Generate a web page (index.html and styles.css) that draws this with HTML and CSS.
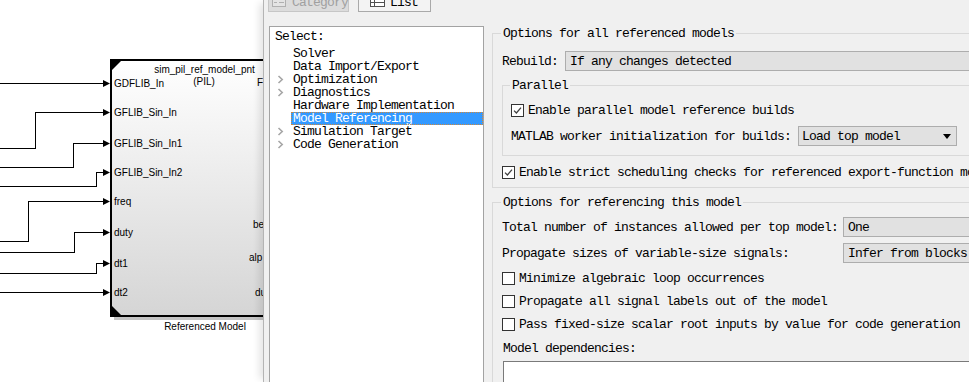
FILE: index.html
```html
<!DOCTYPE html>
<html>
<head>
<meta charset="utf-8">
<link rel="stylesheet" href="styles.css">
</head>
<body>
<div class="screen">
  <div class="canvas">
    <svg class="diagram" width="263" height="382" viewBox="0 0 263 382">
      <defs>
        <linearGradient id="bf" x1="0" y1="0" x2="0" y2="1">
          <stop offset="0" stop-color="#ffffff"/>
          <stop offset="1" stop-color="#d5d5d5"/>
        </linearGradient>
      </defs>
      <rect x="114" y="317" width="160" height="3" fill="#c4c4c4"/>
      <rect x="111" y="60" width="170" height="256" fill="url(#bf)" stroke="#000" stroke-width="2"/>
      <polygon points="112,61 121,61 112,70" fill="#000"/>
      <polygon points="112,306 112,315 121,315" fill="#000"/>
      <g fill="none" stroke="#000" stroke-width="1" shape-rendering="crispEdges">
        <path d="M0 83.5 H103"/>
        <path d="M0 148.5 H35.5 V112.5 H103"/>
        <path d="M0 167.5 H73.5 V143.5 H103"/>
        <path d="M0 186.5 H96.5 V172.5 H103"/>
        <path d="M0 241.5 H28.5 V201.5 H103"/>
        <path d="M0 252.5 H74.5 V232.5 H103"/>
        <path d="M0 273.5 H96.5 V263.5 H103"/>
        <path d="M0 292.5 H103"/>
      </g>
      <g fill="#000">
        <polygon points="103,80 110,83.5 103,87"/>
        <polygon points="103,109 110,112.5 103,116"/>
        <polygon points="103,140 110,143.5 103,147"/>
        <polygon points="103,169 110,172.5 103,176"/>
        <polygon points="103,198 110,201.5 103,205"/>
        <polygon points="103,229 110,232.5 103,236"/>
        <polygon points="103,260 110,263.5 103,267"/>
        <polygon points="103,289 110,292.5 103,296"/>
      </g>
      <g class="dtext">
        <text x="204.5" y="72.5" text-anchor="middle">sim_pil_ref_model_pnt</text>
        <text x="204" y="85" text-anchor="middle">(PIL)</text>
        <text x="114" y="87">GDFLIB_In</text>
        <text x="114" y="116">GFLIB_Sin_In</text>
        <text x="114" y="147">GFLIB_Sin_In1</text>
        <text x="114" y="176">GFLIB_Sin_In2</text>
        <text x="114" y="205">freq</text>
        <text x="114" y="236">duty</text>
        <text x="114" y="267">dt1</text>
        <text x="114" y="296">dt2</text>
        <text x="257" y="86">F</text>
        <text x="253" y="228">be</text>
        <text x="249" y="261">alp</text>
        <text x="255" y="296">du</text>
        <text x="205" y="329.5" text-anchor="middle">Referenced Model</text>
      </g>
    </svg>
  </div>

  <div class="dialog">
    <div class="toolbar">
      <div class="tbtn tbtn-cat">
        <svg class="tb-icon" width="14" height="11" viewBox="0 0 14 11">
          <rect x="0.5" y="0.5" width="13" height="10" fill="#e4e4e4" stroke="#b0b0b0"/>
          <path d="M2 3.5 H5 M2 6.5 H5 M7 3.5 H12 M7 6.5 H12" stroke="#b0b0b0"/>
        </svg>
        <span>Category</span>
      </div>
      <div class="tbtn tbtn-list">
        <svg class="tb-icon" width="15" height="11" viewBox="0 0 15 11">
          <rect x="0.5" y="0.5" width="14" height="10" fill="#fff" stroke="#505050"/>
          <path d="M0.5 3.5 H14.5 M0.5 6.5 H14.5 M4.5 0.5 V10.5" stroke="#505050"/>
        </svg>
        <span>List</span>
      </div>
    </div>

    <div class="content">
      <div class="tree">
        <div class="tree-head">Select:</div>
        <ul class="tree-list">
          <li class="node"><span class="exp"></span><span class="node-lbl">Solver</span></li>
          <li class="node"><span class="exp"></span><span class="node-lbl">Data Import/Export</span></li>
          <li class="node"><span class="exp"><svg width="7" height="9" viewBox="0 0 7 9"><path d="M1.5 1 L5.2 4.5 L1.5 8" fill="none" stroke="#a6a6a6" stroke-width="1.6"/></svg></span><span class="node-lbl">Optimization</span></li>
          <li class="node"><span class="exp"><svg width="7" height="9" viewBox="0 0 7 9"><path d="M1.5 1 L5.2 4.5 L1.5 8" fill="none" stroke="#a6a6a6" stroke-width="1.6"/></svg></span><span class="node-lbl">Diagnostics</span></li>
          <li class="node"><span class="exp"></span><span class="node-lbl">Hardware Implementation</span></li>
          <li class="node"><span class="exp"></span><span class="node-lbl selected">Model Referencing</span></li>
          <li class="node"><span class="exp"><svg width="7" height="9" viewBox="0 0 7 9"><path d="M1.5 1 L5.2 4.5 L1.5 8" fill="none" stroke="#a6a6a6" stroke-width="1.6"/></svg></span><span class="node-lbl">Simulation Target</span></li>
          <li class="node"><span class="exp"><svg width="7" height="9" viewBox="0 0 7 9"><path d="M1.5 1 L5.2 4.5 L1.5 8" fill="none" stroke="#a6a6a6" stroke-width="1.6"/></svg></span><span class="node-lbl">Code Generation</span></li>
        </ul>
      </div>

      <div class="pane">
        <div class="group g1">
          <div class="group-title">Options for all referenced models</div>
          <div class="row r-rebuild">
            <span class="lbl">Rebuild:</span>
            <div class="combo combo-fill">If any changes detected</div>
          </div>
          <div class="group sub">
            <div class="group-title">Parallel</div>
            <div class="check-row cr-par">
              <span class="cb"><svg width="9" height="9" viewBox="0 0 9 9"><path d="M1 4.6 L3.4 7 L8 1.6" fill="none" stroke="#404040" stroke-width="1.3"/></svg></span>
              <span>Enable parallel model reference builds</span>
            </div>
            <div class="row r-matlab">
              <span class="lbl">MATLAB worker initialization for builds:</span>
              <div class="combo combo-arrow">
                <span>Load top model</span>
                <svg width="8" height="5" viewBox="0 0 8 5"><polygon points="0,0 8,0 4,5" fill="#000"/></svg>
              </div>
            </div>
          </div>
          <div class="check-row cr-strict">
            <span class="cb"><svg width="9" height="9" viewBox="0 0 9 9"><path d="M1 4.6 L3.4 7 L8 1.6" fill="none" stroke="#404040" stroke-width="1.3"/></svg></span>
            <span class="nowrap">Enable strict scheduling checks for referenced export-function models</span>
          </div>
        </div>

        <div class="group g2">
          <div class="group-title">Options for referencing this model</div>
          <div class="row r-total">
            <span class="lbl lbl-col">Total number of instances allowed per top model:</span>
            <div class="combo combo-fill">One</div>
          </div>
          <div class="row r-prop">
            <span class="lbl lbl-col">Propagate sizes of variable-size signals:</span>
            <div class="combo combo-fill">Infer from blocks</div>
          </div>
          <div class="check-row cr-g2"><span class="cb"></span><span>Minimize algebraic loop occurrences</span></div>
          <div class="check-row cr-g2"><span class="cb"></span><span>Propagate all signal labels out of the model</span></div>
          <div class="check-row cr-g2"><span class="cb"></span><span>Pass fixed-size scalar root inputs by value for code generation</span></div>
          <div class="plain">Model dependencies:</div>
          <div class="textbox"></div>
        </div>
      </div>
    </div>
  </div>
</div>
</body>
</html>
```

FILE: styles.css
```css
html, body {
  margin: 0;
  padding: 0;
  background: #ffffff;
}

body {
  width: 969px;
  height: 382px;
  overflow: hidden;
}

.screen {
  display: flex;
  width: 969px;
  height: 382px;
  overflow: hidden;
}

.canvas {
  flex: none;
  width: 263px;
  height: 382px;
  background: #ffffff;
}

.diagram {
  display: block;
}

.dtext text {
  font-family: "Liberation Sans", Arial, sans-serif;
  font-size: 10px;
  fill: #000;
}

.dialog {
  position: relative;
  z-index: 1;
  flex: none;
  width: 706px;
  height: 382px;
  box-sizing: border-box;
  background: #f0f0f0;
  border-left: 1px solid #b4b4b4;
  box-shadow: -7px 0 7px -3px rgba(0, 0, 0, 0.10);
  padding-left: 5px;
  overflow: hidden;
  font-family: "Liberation Mono", "DejaVu Sans Mono", monospace;
  font-size: 13px;
  line-height: 13px;
  letter-spacing: -0.8px;
  color: #000;
}

/* toolbar */
.toolbar {
  display: flex;
  gap: 9px;
  margin: -13px 0 0 -1px;
  height: 25px;
}

.tbtn {
  height: 25px;
  box-sizing: border-box;
  display: flex;
  align-items: flex-end;
  padding-bottom: 2px;
  border: 1px solid #adadad;
  white-space: nowrap;
}

.tb-icon {
  flex: none;
  margin-bottom: 2px;
}

.tbtn-cat {
  width: 81px;
  padding-left: 3px;
  gap: 6px;
  background: #dcdcdc;
  border-color: #c6c6c6;
  color: #a0a0a0;
}

.tbtn-list {
  width: 73px;
  padding-left: 11px;
  gap: 5px;
  background: #f3f3f3;
  border-color: #a9a9a9;
}

/* content */
.content {
  display: flex;
  margin-top: 14px;
}

.tree {
  flex: none;
  width: 215px;
  height: 400px;
  box-sizing: border-box;
  background: #ffffff;
  border: 1px solid #a3a3a3;
  padding: 3px 0 0 5px;
}

.tree-head {
  height: 13px;
}

.tree-list {
  list-style: none;
  margin: 4px 0 0 0;
  padding: 0;
}

.node {
  display: flex;
  height: 13px;
}

.exp {
  flex: none;
  width: 16px;
  display: flex;
  align-items: center;
  padding-left: 2px;
  box-sizing: border-box;
}

.exp svg {
  display: block;
}

.node-lbl {
  flex: 1;
  padding-left: 2px;
  white-space: nowrap;
}

.node-lbl.selected {
  background: #3399ff;
  color: #ffffff;
  outline: 1px dotted #d0883a;
  outline-offset: -1px;
}

/* right pane */
.pane {
  flex: none;
  width: 540px;
  padding-left: 8px;
}

.group {
  border: 1px solid #d9d9d9;
  margin-top: 7px;
  padding: 0 0 7px 9px;
}

.group-title {
  width: max-content;
  margin: -7px 0 0 -1px;
  padding: 0 2px;
  background: #f0f0f0;
  height: 13px;
  white-space: nowrap;
}

.g2 {
  margin-top: 14px;
}

.sub {
  margin-top: 14px;
  padding: 0 0 9px 8px;
}

.row {
  display: flex;
  align-items: center;
  height: 20px;
}

.lbl {
  flex: none;
  white-space: nowrap;
}

.lbl-col {
  width: 341px;
}

.r-rebuild { margin-top: 11px; }
.r-rebuild .combo { margin-left: 7px; }

.r-matlab { margin-top: 8px; }

.r-total { margin-top: 8px; }
.r-prop { margin-top: 6px; }

.combo {
  height: 20px;
  box-sizing: border-box;
  border: 1px solid #adadad;
  background: #e1e1e1;
  padding: 0 5px 0 4px;
  display: flex;
  align-items: center;
  white-space: nowrap;
}

.combo-fill {
  flex: 1;
}

.combo-arrow {
  flex: none;
  width: 159px;
  margin-left: 7px;
  justify-content: space-between;
  padding-left: 3px;
  padding-right: 5px;
}

.combo-arrow svg {
  display: block;
}

.check-row {
  display: flex;
  align-items: center;
  height: 16px;
  white-space: nowrap;
}

.cb {
  flex: none;
  width: 13px;
  height: 13px;
  box-sizing: border-box;
  border: 1px solid #333333;
  background: #ffffff;
  margin-right: 4px;
  display: flex;
  align-items: center;
  justify-content: center;
}

.cb svg {
  display: block;
}

.cr-par { margin-top: 10px; }
.cr-strict { margin-top: 8px; }
.cr-g2 { margin-top: 7px; }

.plain {
  margin-top: 10px;
  height: 13px;
  padding-left: 1px;
}

.textbox {
  margin: 6px 0 0 1px;
  height: 40px;
  background: #ffffff;
  border: 1px solid #7a7a7a;
  border-right: none;
}
```
